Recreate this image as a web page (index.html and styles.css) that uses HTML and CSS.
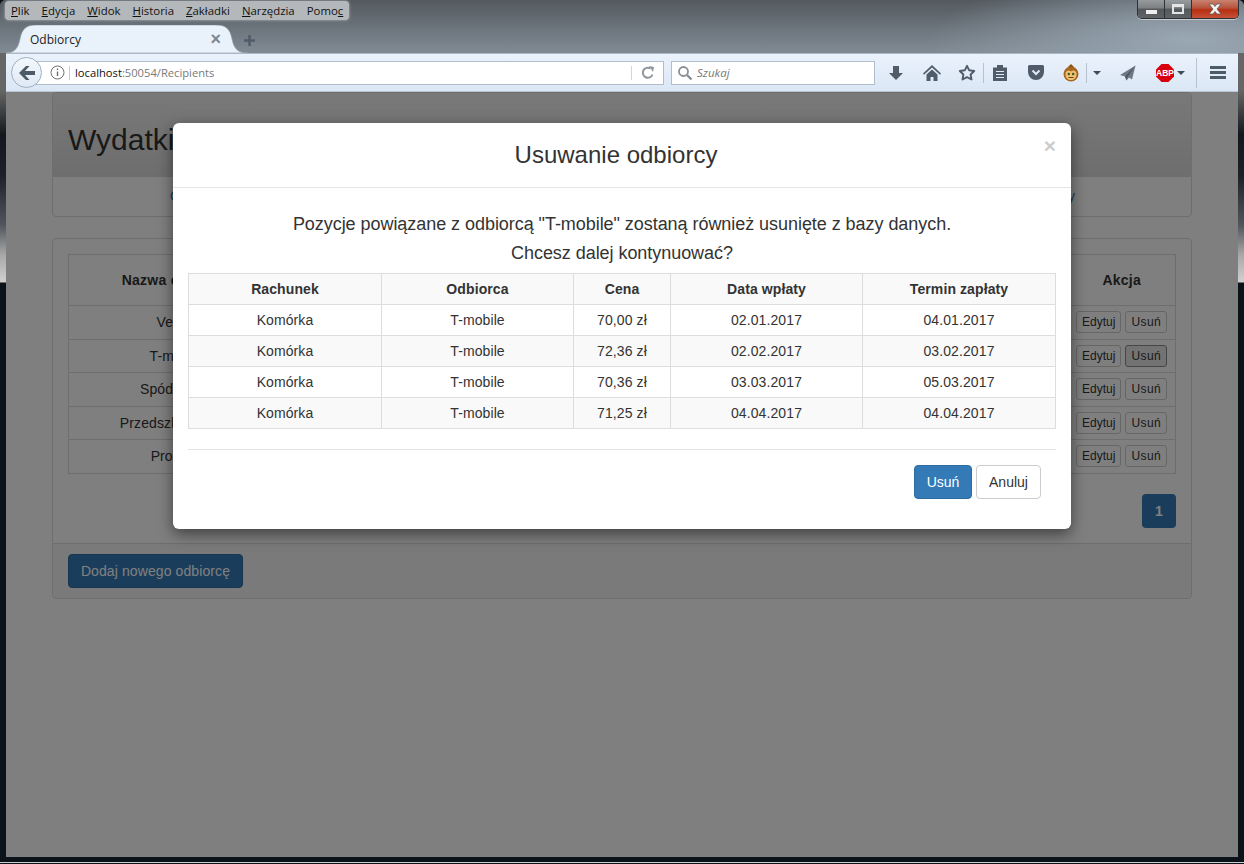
FILE: index.html
```html
<!DOCTYPE html>
<html lang="pl">
<head>
    <meta charset="UTF-8">
    <title>Odbiorcy</title>
    <link rel="stylesheet" href="styles.css">
</head>
<body>
<div class="window">
    <div class="titlebar">
        <div class="topbar">
            <ul class="menu">
                <li><u>P</u>lik</li>
                <li><u>E</u>dycja</li>
                <li><u>W</u>idok</li>
                <li><u>H</u>istoria</li>
                <li><u>Z</u>akładki</li>
                <li><u>N</u>arzędzia</li>
                <li>Pomo<u>c</u></li>
            </ul>
            <div class="controls">
                <div class="ctl ctl-min"><span></span></div>
                <div class="ctl ctl-max"><span></span></div>
                <div class="ctl ctl-close">
                    <svg width="18" height="12" viewBox="0 0 18 12"><path d="M3 1h4l2 2.5L11 1h4l-4 5 4 5h-4L9 8.500 7 11H3l4-5z" fill="#f4f4f4" stroke="#555" stroke-width=".7"/></svg>
                </div>
            </div>
        </div>
        <div class="tabstrip">
            <div class="tab">
                <svg class="tab-shape" width="243" height="28" viewBox="0 0 243 28"><path d="M0 28C9 28 13 24 15 14 17 4 21 0 31 0H211C221 0 225 4 227 14 229 24 233 28 243 28Z" fill="#e9f1fb" stroke="#8f9aa6" stroke-width=".6"/></svg>
                <span class="tab-title">Odbiorcy</span>
                <span class="tab-close">×</span>
            </div>
            <svg class="tab-new" width="11" height="11" viewBox="0 0 11 11"><path d="M4.300 0h2.400v4.300H11v2.400H6.700V11H4.300V6.700H0V4.300h4.300z" fill="#4f5b68"/></svg>
        </div>
    </div>

    <div class="navbar">
        <div class="back">
            <svg width="18" height="16" viewBox="0 0 18 16"><path d="M8 1 1 8l7 7h3.500L7 10h10V6H7l4.500-5z" fill="#4d5a67"/></svg>
        </div>
        <div class="urlbar">
            <svg class="info" width="15" height="15" viewBox="0 0 15 15"><circle cx="7.500" cy="7.500" r="6.500" fill="none" stroke="#6f6f6f"/><path d="M7.500 6.500v4.500M7.500 3.500v1.500" stroke="#6f6f6f" stroke-width="1.400"/></svg>
            <span class="url"><b>localhost</b>:50054/Recipients</span>
            <span class="reload">
                <svg width="14" height="14" viewBox="0 0 14 14"><path d="M11.500 8.500A5 5 0 1 1 9.500 2.500" fill="none" stroke="#8e959c" stroke-width="2"/><path d="M8 0l5 1-1 5z" fill="#8e959c"/></svg>
            </span>
        </div>
        <div class="searchbar">
            <svg width="16" height="16" viewBox="0 0 16 16"><circle cx="6.500" cy="6.500" r="4.500" fill="none" stroke="#8a8f95" stroke-width="1.800"/><path d="M10 10l4.500 4.500" stroke="#8a8f95" stroke-width="2.400"/></svg>
            <span>Szukaj</span>
        </div>
        <div class="tools">
            <span class="tool w36"><svg width="16" height="16" viewBox="0 0 16 16"><path d="M5 1h6v7h4l-7 7-7-7h4z" fill="#505c69"/></svg></span>
            <span class="tool w36"><svg width="18" height="16" viewBox="0 0 18 16"><path d="M9 0 0 8.500l1 1.200L9 2.500l8 7.200 1-1.200zM3.500 9.500V16h4v-4h3v4h4V9.500L9 4.500z" fill="#505c69"/></svg></span>
            <span class="tool w33"><svg width="18" height="17" viewBox="0 0 18 17"><path d="M9 1.800l2.200 4.500 5 .7-3.600 3.500.9 5L9 13.100l-4.500 2.400.9-5L1.800 7l5-.7z" fill="none" stroke="#505c69" stroke-width="1.900" stroke-linejoin="round"/></svg></span>
            <span class="tool-sep"></span>
            <span class="tool w31"><svg width="14" height="16" viewBox="0 0 14 16"><path d="M0 2.500h4V0h6v2.500h4V16H0z" fill="#505c69"/><path d="M3 6.500h8M3 9.500h8M3 12.500h8" stroke="#dfe9f5" stroke-width="1.200"/></svg></span>
            <span class="tool w41"><svg width="16" height="15" viewBox="0 0 16 15"><path d="M1.500 0h13A1.500 1.500 0 0 1 16 1.500V7A8 8 0 0 1 0 7V1.500A1.500 1.500 0 0 1 1.500 0z" fill="#505c69"/><path d="M4.500 5.500 8 9l3.500-3.500" fill="none" stroke="#dfe9f5" stroke-width="2"/></svg></span>
            <span class="tool w30"><svg width="16" height="18" viewBox="0 0 16 18"><circle cx="8" cy="10" r="7.500" fill="#a8651f"/><path d="M5 3l3-3 3 3z" fill="#8a5218"/><path d="M8 7.500C10 5.500 13.500 6.500 13.500 10 13.500 14 11 16 8 16S2.500 14 2.500 10C2.500 6.500 6 5.500 8 7.500z" fill="#f0c070"/><circle cx="5.800" cy="10" r="1.200" fill="#2f5a20"/><circle cx="10.200" cy="10" r="1.200" fill="#2f5a20"/><path d="M5.500 13.500h5" stroke="#6a4516"/></svg></span>
            <span class="tool-sep"></span>
            <span class="tool w20"><i class="caret"></i></span>
            <span class="tool w41"><svg width="16" height="16" viewBox="0 0 16 16"><path d="M15.500.500 0 10l5 1.500 1.500 4 2.500-3 3 2z" fill="#6d7883"/><path d="M15.500.500 5 11.500l1.500 4 1-3.500z" fill="#4d5863"/></svg></span>
            <span class="tool w42 abp">
                <svg width="18" height="18" viewBox="0 0 18 18"><path d="M5.500 0h7L18 5.500v7L12.500 18h-7L0 12.500v-7z" fill="#d8000c"/><text x="9" y="12" text-anchor="middle" class="abp-text">ABP</text></svg>
                <i class="caret"></i>
            </span>
            <span class="tool-sep sep-long"></span>
            <span class="tool w41"><svg width="16" height="13" viewBox="0 0 16 13"><path d="M0 0h16v3H0zM0 5h16v3H0zM0 10h16v3H0z" fill="#4d5a67"/></svg></span>
        </div>
    </div>

    <div class="viewport">
        <div class="container">
            <div class="panel">
                <div class="page-head"><h1>Wydatki</h1></div>
                <div class="page-links">
                    <a href="#">Odbiorcy</a>
                    <a href="#">Zestawienie opłaty</a>
                </div>
            </div>

            <div class="panel">
                <div class="panel-body">
                    <table class="list">
                        <colgroup><col class="col-name"><col><col class="col-act"></colgroup>
                        <thead>
                            <tr><th>Nazwa odbiorcy</th><th>Adres</th><th>Akcja</th></tr>
                        </thead>
                        <tbody>
                            <tr><td>Vectra</td><td></td><td><button class="btn-xs edit">Edytuj</button><button class="btn-xs del">Usuń</button></td></tr>
                            <tr><td>T-mobile</td><td></td><td><button class="btn-xs edit">Edytuj</button><button class="btn-xs del is-active">Usuń</button></td></tr>
                            <tr><td>Spódzielnia</td><td></td><td><button class="btn-xs edit">Edytuj</button><button class="btn-xs del">Usuń</button></td></tr>
                            <tr><td>Przedszkole nr 15</td><td></td><td><button class="btn-xs edit">Edytuj</button><button class="btn-xs del">Usuń</button></td></tr>
                            <tr><td>Protetyk</td><td></td><td><button class="btn-xs edit">Edytuj</button><button class="btn-xs del">Usuń</button></td></tr>
                        </tbody>
                    </table>
                    <div class="pager"><span class="page-num">1</span></div>
                </div>
                <div class="panel-foot">
                    <button class="btn btn-primary btn-add">Dodaj nowego odbiorcę</button>
                </div>
            </div>
        </div>

        <!-- backdrop and dialog lie over the page -->
        <div class="backdrop"></div>
        <div class="modal">
            <div class="modal-head">
                <h4>Usuwanie odbiorcy</h4>
                <span class="modal-close">×</span>
            </div>
            <div class="modal-body">
                <p>Pozycje powiązane z odbiorcą "T-mobile" zostaną również usunięte z bazy danych.</p>
                <p>Chcesz dalej kontynuować?</p>
                <table class="bills">
                    <colgroup><col class="c1"><col class="c2"><col class="c3"><col class="c4"><col class="c5"></colgroup>
                    <thead>
                        <tr><th>Rachunek</th><th>Odbiorca</th><th>Cena</th><th>Data wpłaty</th><th>Termin zapłaty</th></tr>
                    </thead>
                    <tbody>
                        <tr><td>Komórka</td><td>T-mobile</td><td>70,00 zł</td><td>02.01.2017</td><td>04.01.2017</td></tr>
                        <tr><td>Komórka</td><td>T-mobile</td><td>72,36 zł</td><td>02.02.2017</td><td>03.02.2017</td></tr>
                        <tr><td>Komórka</td><td>T-mobile</td><td>70,36 zł</td><td>03.03.2017</td><td>05.03.2017</td></tr>
                        <tr><td>Komórka</td><td>T-mobile</td><td>71,25 zł</td><td>04.04.2017</td><td>04.04.2017</td></tr>
                    </tbody>
                </table>
                <hr>
                <div class="modal-foot">
                    <button class="btn btn-primary btn-ok">Usuń</button>
                    <button class="btn btn-default">Anuluj</button>
                </div>
            </div>
        </div>
    </div>
</div>
</body>
</html>
```

FILE: styles.css
```css
* {
    box-sizing: border-box;
}
html, body {
    margin: 0;
    height: 100%;
    overflow: hidden;
}
body {
    background-color: #0c1318;
    font-family: "Liberation Sans", Arial, sans-serif;
    font-size: 14px;
    color: #333;
}

/* browser window */
.window {
    display: flex;
    flex-direction: column;
    width: 1244px;
    height: 863px;
    padding: 0 6px 5px;
    border-bottom: 1px solid #c9cdd0;
    border-radius: 6px 6px 0 0;
    background: linear-gradient(180deg, #666 90px, #12181d 135px, #1b2126 175px, #50565c 225px, #a8a8a8 255px, #d0d0d0 282px, #0c1318 283px, #0c1318 100%);
}
.titlebar {
    display: flex;
    flex-direction: column;
    height: 53px;
    margin: 0 -6px;
    border-radius: 6px 6px 0 0;
    background:
        radial-gradient(ellipse 260px 70px at 1190px 40px, #9aa8b4 0, rgba(154, 168, 180, 0) 100%),
        linear-gradient(180deg, #53595f 0, #7f8992 50px);
}
.topbar {
    display: flex;
    justify-content: space-between;
    height: 25px;
    padding: 1px 5px 0 5px;
}
.menu {
    display: flex;
    gap: 12px;
    height: 19px;
    margin: 0;
    padding: 0 6px;
    list-style-type: none;
    background-color: #b4b8bb;
    border-radius: 4px;
    box-shadow: 0 0 3px #b4b8bb;
    font-family: "Open Sans", sans-serif;
    font-size: 11.4px;
    line-height: 19px;
    color: #111;
}
.controls {
    display: flex;
    height: 19px;
    margin-top: -1px;
    border: 1px solid #2c3136;
    border-top: none;
    border-radius: 0 0 5px 5px;
    box-shadow: 0 1px 0 rgba(255, 255, 255, 0.5);
    overflow: hidden;
}
.ctl {
    display: flex;
    align-items: center;
    justify-content: center;
    width: 28px;
    border-right: 1px solid #2c3136;
    background: linear-gradient(180deg, #989b9d 0, #7d8083 45%, #55585b 50%, #606366 100%);
}
.ctl-min {
    width: 27px;
}
.ctl-max {
    width: 27px;
}
.ctl-min span {
    width: 11px;
    height: 4px;
    margin-top: 5px;
    background-color: #eee;
}
.ctl-max span {
    width: 12px;
    height: 10px;
    border: 2px solid #e4e4e4;
    border-top-width: 3px;
}
.ctl-close {
    width: 46px;
    border-right: none;
    background: linear-gradient(180deg, #c9826f 0, #b5533c 45%, #b92d10 55%, #c4523a 100%);
}

/* tabs */
.tabstrip {
    display: flex;
    align-items: center;
    height: 28px;
    padding: 0 0 0 5px;
}
.tab {
    position: relative;
    display: flex;
    align-items: center;
    justify-content: space-between;
    width: 243px;
    height: 28px;
    padding: 0 27px 0 25px;
    font-family: "Open Sans", sans-serif;
    font-size: 12px;
    color: #1c1c1c;
}
.tab-shape {
    position: absolute;
    left: 0;
    top: 0;
}
.tab-title, .tab-close {
    position: relative;
}
.tab-close {
    font-family: "Liberation Sans", sans-serif;
    font-size: 18px;
    font-weight: bold;
    color: #7d8791;
}
.tab-new {
    margin-left: -4px;
    margin-top: 2px;
}

/* toolbar */
.navbar {
    display: flex;
    align-items: center;
    height: 39px;
    padding-left: 5px;
    background: linear-gradient(180deg, #eaf2fc 0, #dbe7f5 100%);
    border-top: 1px solid #a9b7c6;
    border-bottom: 1px solid #b7c6d6;
}
.back {
    position: relative;
    z-index: 1;
    display: flex;
    align-items: center;
    justify-content: center;
    width: 31px;
    height: 31px;
    background: linear-gradient(180deg, #f4f8fd 0, #dfe9f5 100%);
    border: 1px solid #9fb1c3;
    border-radius: 50%;
}
.urlbar {
    display: flex;
    align-items: center;
    width: 634px;
    height: 24px;
    margin-left: -12px;
    padding-left: 19px;
    background-color: #fff;
    border: 1px solid #b0bdcc;
    font-family: "Open Sans", sans-serif;
    font-size: 11.2px;
}
.info {
    margin-right: 4px;
}
.url {
    flex: 1;
    height: 14px;
    padding-left: 5px;
    border-left: 1px solid #ccc;
    line-height: 14px;
    color: #7a7a7a;
}
.url b {
    font-weight: normal;
    color: #111;
}
.reload {
    display: flex;
    align-items: center;
    justify-content: center;
    width: 32px;
    height: 14px;
    border-left: 1px solid #d5d5d5;
}
.searchbar {
    display: flex;
    align-items: center;
    gap: 4px;
    width: 204px;
    height: 24px;
    margin-left: 7px;
    padding-left: 5px;
    background-color: #fff;
    border: 1px solid #b0bdcc;
    font-family: "Open Sans", sans-serif;
    font-size: 11.5px;
    font-style: italic;
    color: #777;
}
.tools {
    display: flex;
    align-items: center;
    margin-left: 3px;
}
.tool {
    display: flex;
    align-items: center;
    justify-content: center;
}
.w20 { width: 20px; }
.w30 { width: 30px; }
.w31 { width: 31px; }
.w33 { width: 33px; }
.w36 { width: 36px; }
.w41 { width: 41px; }
.w42 { width: 42px; }
.abp {
    gap: 3px;
    justify-content: flex-start;
    padding-left: 8px;
}
.abp-text {
    font-family: "Liberation Sans", sans-serif;
    font-size: 8.500px;
    font-weight: bold;
    fill: #fff;
}
.tool-sep {
    width: 1px;
    height: 20px;
    background-color: #b7c2ce;
}
.sep-long {
    height: 30px;
    margin-left: 6px;
}
.caret {
    width: 0;
    height: 0;
    border-top: 4px solid #3f4a55;
    border-left: 4px solid transparent;
    border-right: 4px solid transparent;
}

/* page behind the dialog */
.viewport {
    position: relative;
    flex: 1;
    background-color: #fff;
    overflow: hidden;
}
.container {
    display: flex;
    flex-direction: column;
    gap: 21px;
    width: 1140px;
    margin: 0 auto;
}
.panel {
    background-color: #fff;
    border: 1px solid #ddd;
    border-radius: 4px;
}
.page-head {
    height: 84px;
    padding: 0 15px;
    background: linear-gradient(180deg, #f2f2f2 0, #dcdcdc 100%);
    border-bottom: 1px solid #ddd;
    border-radius: 4px 4px 0 0;
}
.page-head h1 {
    margin: 0;
    font-size: 30px;
    font-weight: normal;
    line-height: 94px;
}
.page-links {
    display: flex;
    justify-content: space-between;
    height: 39px;
    padding: 0 116px 0 117px;
    line-height: 39px;
}
.page-links a {
    color: #337ab7;
    text-decoration: none;
}
.panel-body {
    padding: 15px 15px 15px;
}
.list {
    width: 100%;
    border-collapse: collapse;
    table-layout: fixed;
    text-align: center;
}
.col-name {
    width: 216px;
}
.col-act {
    width: 107px;
}
.list th, .list td {
    padding: 0;
    border-top: 1px solid #ddd;
    border-bottom: 1px solid #ddd;
    letter-spacing: 0.1px;
}
.list th {
    height: 51px;
    letter-spacing: 0.25px;
}
.list th:first-child, .list td:first-child {
    border-left: 1px solid #ddd;
}
.list th:last-child, .list td:last-child {
    border-right: 1px solid #ddd;
}
.list td {
    height: 33.500px;
}
.btn-xs {
    height: 22px;
    padding: 0;
    background-color: #fff;
    border: 1px solid #ccc;
    border-radius: 3px;
    font-family: inherit;
    font-size: 12px;
    color: #333;
}
.btn-xs.edit {
    width: 45px;
    margin-right: 4px;
}
.btn-xs.del {
    width: 42px;
    letter-spacing: 0.4px;
}
.btn-xs.is-active {
    background-color: #e6e6e6;
    border-color: #8c8c8c;
}
.pager {
    display: flex;
    justify-content: flex-end;
    margin-top: 20px;
}
.page-num {
    width: 34px;
    height: 34px;
    background-color: #337ab7;
    border-radius: 4px;
    font-weight: bold;
    line-height: 34px;
    text-align: center;
    color: #fff;
}
.panel-foot {
    padding: 10px 15px;
    background-color: #f5f5f5;
    border-top: 1px solid #ddd;
    border-radius: 0 0 4px 4px;
}
.btn {
    height: 34px;
    padding: 6px 0;
    border: 1px solid transparent;
    border-radius: 4px;
    font-family: inherit;
    font-size: 14px;
}
.btn-primary {
    background-color: #337ab7;
    border-color: #2e6da4;
    color: #fff;
}
.btn-default {
    width: 65px;
    background-color: #fff;
    border-color: #ccc;
    color: #333;
}
.btn-add {
    width: 175px;
    letter-spacing: 0.1px;
}
.btn-ok {
    width: 58px;
}

/* dialog */
.backdrop {
    position: absolute;
    inset: 0;
    background-color: rgba(0, 0, 0, 0.5);
}
.modal {
    position: absolute;
    left: 167px;
    top: 31px;
    width: 898px;
    height: 406px;
    background-color: #fff;
    border-radius: 6px;
    box-shadow: 0 5px 15px rgba(0, 0, 0, 0.5);
}
.modal-head {
    position: relative;
    height: 65px;
    border-bottom: 1px solid #e5e5e5;
}
.modal-head h4 {
    margin: 0;
    padding-right: 12px;
    font-size: 24px;
    font-weight: normal;
    line-height: 64px;
    text-align: center;
}
.modal-close {
    position: absolute;
    right: 15px;
    top: 12px;
    font-size: 21px;
    font-weight: bold;
    line-height: 21px;
    color: #ccc;
}
.modal-body {
    padding: 22px 15px 0;
}
.modal-body p {
    margin: 0;
    font-size: 18px;
    line-height: 29px;
    letter-spacing: -0.05px;
    text-align: center;
}
.bills {
    width: 868px;
    margin-top: 5px;
    border-collapse: collapse;
    table-layout: fixed;
    text-align: center;
}
.c1 { width: 193px; }
.c2 { width: 192px; }
.c3 { width: 97px; }
.c4 { width: 192px; }
.c5 { width: 193px; }
.bills th, .bills td {
    height: 31px;
    padding: 5px;
    border: 1px solid #ddd;
    line-height: 20px;
    letter-spacing: 0.1px;
}
.bills th {
    background-color: #f9f9f9;
}
.bills tbody tr:nth-child(even) {
    background-color: #f9f9f9;
}
.modal-body hr {
    margin: 20px 0 0;
    border: none;
    border-top: 1px solid #e5e5e5;
}
.modal-foot {
    display: flex;
    justify-content: flex-end;
    gap: 4px;
    padding: 15px 15px 0;
}
```
